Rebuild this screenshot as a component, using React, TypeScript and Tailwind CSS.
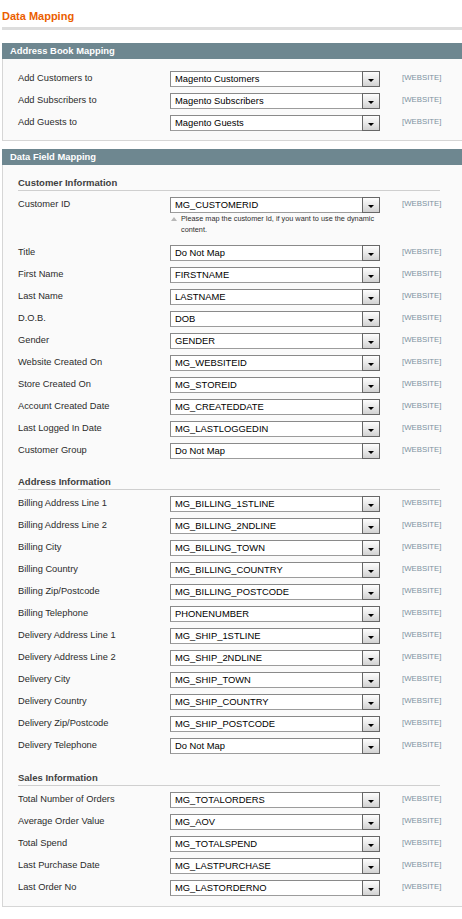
import React from 'react';

type Row = { label: string; value: string; note?: string };

const addressBook: Row[] = [
  { label: 'Add Customers to', value: 'Magento Customers' },
  { label: 'Add Subscribers to', value: 'Magento Subscribers' },
  { label: 'Add Guests to', value: 'Magento Guests' },
];

const groups: { title: string; pt: string; rows: Row[] }[] = [
  {
    title: 'Customer Information',
    pt: 'pt-[11px]',
    rows: [
      {
        label: 'Customer ID',
        value: 'MG_CUSTOMERID',
        note: 'Please map the customer Id, if you want to use the dynamic content.',
      },
      { label: 'Title', value: 'Do Not Map' },
      { label: 'First Name', value: 'FIRSTNAME' },
      { label: 'Last Name', value: 'LASTNAME' },
      { label: 'D.O.B.', value: 'DOB' },
      { label: 'Gender', value: 'GENDER' },
      { label: 'Website Created On', value: 'MG_WEBSITEID' },
      { label: 'Store Created On', value: 'MG_STOREID' },
      { label: 'Account Created Date', value: 'MG_CREATEDDATE' },
      { label: 'Last Logged In Date', value: 'MG_LASTLOGGEDIN' },
      { label: 'Customer Group', value: 'Do Not Map' },
    ],
  },
  {
    title: 'Address Information',
    pt: 'pt-[13px]',
    rows: [
      { label: 'Billing Address Line 1', value: 'MG_BILLING_1STLINE' },
      { label: 'Billing Address Line 2', value: 'MG_BILLING_2NDLINE' },
      { label: 'Billing City', value: 'MG_BILLING_TOWN' },
      { label: 'Billing Country', value: 'MG_BILLING_COUNTRY' },
      { label: 'Billing Zip/Postcode', value: 'MG_BILLING_POSTCODE' },
      { label: 'Billing Telephone', value: 'PHONENUMBER' },
      { label: 'Delivery Address Line 1', value: 'MG_SHIP_1STLINE' },
      { label: 'Delivery Address Line 2', value: 'MG_SHIP_2NDLINE' },
      { label: 'Delivery City', value: 'MG_SHIP_TOWN' },
      { label: 'Delivery Country', value: 'MG_SHIP_COUNTRY' },
      { label: 'Delivery Zip/Postcode', value: 'MG_SHIP_POSTCODE' },
      { label: 'Delivery Telephone', value: 'Do Not Map' },
    ],
  },
  {
    title: 'Sales Information',
    pt: 'pt-[14px]',
    rows: [
      { label: 'Total Number of Orders', value: 'MG_TOTALORDERS' },
      { label: 'Average Order Value', value: 'MG_AOV' },
      { label: 'Total Spend', value: 'MG_TOTALSPEND' },
      { label: 'Last Purchase Date', value: 'MG_LASTPURCHASE' },
      { label: 'Last Order No', value: 'MG_LASTORDERNO' },
    ],
  },
];

const FakeSelect: React.FC<{ value: string }> = ({ value }) => (
  <div className="flex h-[16px] w-[210px] items-center border border-[#9c9c9c] border-l-[#8a8a8a] border-t-[#8a8a8a] bg-white">
    <span className="flex-1 truncate pl-[4px] text-[9.4px] leading-[14px] text-black">{value}</span>
    <div className="-my-px -mr-px flex h-[16px] w-[18px] items-end justify-center border border-[#676767] bg-gradient-to-b from-[#fdfdfd] via-[#e9e9e9] to-[#d2d2d2] pb-[4px]">
      <span className="h-0 w-0 border-l-[3px] border-r-[3px] border-t-[3px] border-l-transparent border-r-transparent border-t-black" />
    </div>
  </div>
);

const FieldRow: React.FC<{ row: Row }> = ({ row }) => (
  <div className={`flex items-start pt-[3px] ${row.note ? 'pb-[7px]' : 'pb-[3px]'}`}>
    <div className="w-[152px] text-[9.3px] leading-[15px] text-[#2b2b2b]">{row.label}</div>
    <div className="w-[210px]">
      <FakeSelect value={row.value} />
      {row.note && (
        <div className="flex items-start">
          <span className="ml-[1px] mt-[4px] h-0 w-0 border-b-[4px] border-l-[3px] border-r-[3px] border-b-[#b8b8b8] border-l-transparent border-r-transparent" />
          <p className="ml-[4px] w-[200px] text-[7.3px] leading-[11px] text-[#2e2e2e]">{row.note}</p>
        </div>
      )}
    </div>
    <div className="ml-[22px] text-[7.8px] leading-[14px] text-[#7d91a0]">[WEBSITE]</div>
  </div>
);

const SectionHead: React.FC<{ title: string }> = ({ title }) => (
  <div className="flex h-[16px] items-center bg-[#6e8790] pl-[8px] text-[9.4px] font-bold text-white">
    {title}
  </div>
);

export default function App() {
  return (
    <div className="min-h-[919px] w-[462px] overflow-hidden bg-white font-['Liberation_Sans',Arial,sans-serif]">
      <h3 className="pl-[2px] pt-[10px] text-[11px] font-bold leading-[13px] text-[#eb5e00]">Data Mapping</h3>
      <div className="ml-[2px] mt-[4px] h-[3px] bg-[#dddddd]" />

      <div className="ml-[2px] mt-[13px]">
        <SectionHead title="Address Book Mapping" />
        <div className="border-b border-l border-[#d6d6d6] bg-[#fafafa] pb-[6px] pl-[15px] pt-[9px]">
          {addressBook.map((r) => (
            <FieldRow key={r.label} row={r} />
          ))}
        </div>
      </div>

      <div className="ml-[2px] mt-[8px]">
        <SectionHead title="Data Field Mapping" />
        <div className="border-b border-l border-[#d6d6d6] bg-[#fafafa] pb-[7px] pl-[15px]">
          {groups.map((g) => (
            <div key={g.title}>
              <h4
                className={`${g.pt} mr-[22px] border-b border-[#cfcfcf] text-[9.5px] font-bold leading-[14px] text-[#3f3f3f]`}
              >
                {g.title}
              </h4>
              <div className="mt-[3px]">
                {g.rows.map((r) => (
                  <FieldRow key={r.label} row={r} />
                ))}
              </div>
            </div>
          ))}
        </div>
      </div>
    </div>
  );
}
